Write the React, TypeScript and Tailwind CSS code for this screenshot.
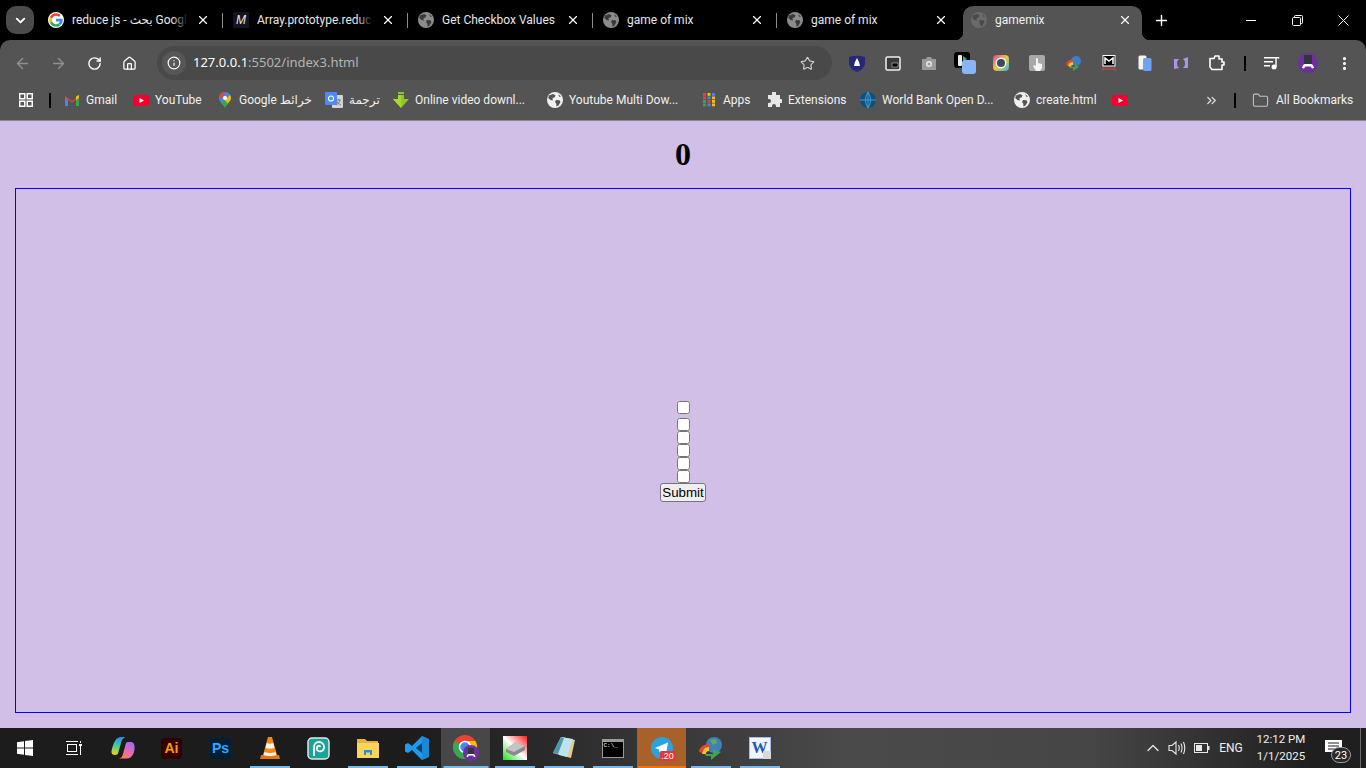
import React from 'react';
import {
  ArrowLeft,
  ArrowRight,
  RotateCw,
  Home,
  Info,
  Star,
  X,
  Plus,
  ChevronDown,
  ChevronUp,
  ChevronsRight,
  Folder,
  EllipsisVertical,
} from 'lucide-react';

const UI_FONT = "font-['Roboto','Noto_Sans','DejaVu_Sans',sans-serif]";

function Globe({ size = 16, color = '#8c8c8c', land = '#3a3a3a' }: { size?: number; color?: string; land?: string }) {
  return (
    <svg width={size} height={size} viewBox="0 0 16 16" className="shrink-0">
      <circle cx="8" cy="8" r="8" fill={color} />
      <path d="M2 3.5 L6 2 L8.5 3.2 L7.5 5.5 L5.5 6 L5.8 8.5 L3.5 8 L1.2 6 Z" fill={land} />
      <path d="M9 8 L12.5 8.2 L13.5 10 L11.5 13.5 L9.5 14.5 L9.2 11.5 L8 10 Z" fill={land} />
      <path d="M11 2 L14 4.5 L12.5 5 Z" fill={land} />
    </svg>
  );
}

function GoogleG() {
  return (
    <svg width="16" height="16" viewBox="0 0 48 48" className="shrink-0">
      <circle cx="24" cy="24" r="24" fill="#fff" />
      <path fill="#EA4335" d="M24 11c3.4 0 6.3 1.2 8.6 3.3l5.4-5.4C34.500 5.700 29.700 3.500 24 3.500 16 3.500 9.100 8.100 5.700 14.800l6.400 5C13.700 14.700 18.400 11 24 11z" />
      <path fill="#4285F4" d="M44 24.500c0-1.400-.1-2.700-.4-4H24v7.800h11.300c-.5 2.500-2 4.700-4.200 6.100l6.200 4.800C41.600 36.600 44 31 44 24.500z" />
      <path fill="#FBBC05" d="M12.100 28.200c-.4-1.300-.7-2.700-.7-4.200s.3-2.900.7-4.200l-6.400-5C4.300 17.600 3.500 20.700 3.500 24s.8 6.400 2.200 9.200l6.400-5z" />
      <path fill="#34A853" d="M24 44.500c5.500 0 10.100-1.800 13.300-4.900l-6.200-4.800c-1.800 1.200-4.200 1.900-7.100 1.900-5.600 0-10.300-3.700-11.900-8.800l-6.400 5C9.100 39.900 16 44.500 24 44.500z" />
    </svg>
  );
}

function MdnIcon() {
  return (
    <div className="w-4 h-4 bg-[#15141f] flex items-center justify-center shrink-0">
      <span className="text-[12px] leading-none italic text-[#e8e8e8] font-['Liberation_Sans',sans-serif]">M</span>
    </div>
  );
}

const tabs = [
  { title: 'reduce js - بحث Google', icon: <GoogleG />, width: 'w-[185px]', fade: true },
  { title: 'Array.prototype.reduce()', icon: <MdnIcon />, width: 'w-[185px]', fade: true },
  { title: 'Get Checkbox Values', icon: <Globe />, width: 'w-[185px]', fade: false },
  { title: 'game of mix', icon: <Globe />, width: 'w-[184px]', fade: false },
  { title: 'game of mix', icon: <Globe />, width: 'w-[184px]', fade: false },
];

function TabStrip() {
  return (
    <div className={`h-10 bg-black flex items-start shrink-0 relative ${UI_FONT}`}>
      <div className="ml-[6px] mt-[6px] w-[28px] h-[28px] rounded-[10px] bg-[#4b4b4b] flex items-center justify-center shrink-0">
        <ChevronDown size={15} strokeWidth={3} color="#fff" />
      </div>
      <div className="ml-[6px] flex items-start">
        {tabs.map((tab, i) => (
          <div key={i} className={`${tab.width} h-10 flex items-center pl-2 pr-[15px] gap-2 relative shrink-0`}>
            {tab.icon}
            <span className="flex-1 overflow-hidden whitespace-nowrap text-[12px] text-[#e6e6e6] relative">
              {tab.title}
              {tab.fade && <span className="absolute right-0 top-0 bottom-0 w-4 bg-gradient-to-r from-transparent to-black" />}
            </span>
            <X size={14} strokeWidth={2} color="#fff" className="shrink-0" />
            {i < tabs.length - 1 && <span className="absolute right-[2px] top-[13px] w-px h-[15px] bg-[#8a8a8a]" />}
          </div>
        ))}
        <div className="w-[179px] h-[34px] mt-[6px] bg-[#545454] rounded-t-[10px] flex items-center pl-2 pr-[10px] gap-2 relative shrink-0 pb-[6px]">
          <Globe color="#6a6a6a" land="#4a4a4a" />
          <span className="flex-1 text-[12px] text-[#f0f0f0] whitespace-nowrap">gamemix</span>
          <X size={14} strokeWidth={2} color="#fff" />
          <span className="absolute -left-[8px] bottom-0 w-2 h-2 bg-[radial-gradient(circle_at_0_0,#000_8px,#545454_8.500px)]" />
          <span className="absolute -right-[8px] bottom-0 w-2 h-2 bg-[radial-gradient(circle_at_100%_0,#000_8px,#545454_8.500px)]" />
        </div>
        <div className="w-[38px] h-10 flex items-center justify-center shrink-0">
          <Plus size={17} strokeWidth={2} color="#fff" />
        </div>
      </div>
      <div className="ml-auto flex h-10 items-center shrink-0">
        <div className="w-[46px] h-10 flex items-center justify-center">
          <span className="w-[10px] h-px bg-white" />
        </div>
        <div className="w-[46px] h-10 flex items-center justify-center">
          <svg width="11" height="11" viewBox="0 0 11 11" fill="none" stroke="#fff">
            <rect x="0.500" y="2.500" width="8" height="8" rx="1" />
            <path d="M2.500 2.500V1.500a1 1 0 0 1 1-1h6a1 1 0 0 1 1 1v6a1 1 0 0 1-1 1H8.500" />
          </svg>
        </div>
        <div className="w-[46px] h-10 flex items-center justify-center">
          <svg width="11" height="11" viewBox="0 0 11 11" stroke="#fff" strokeWidth="1">
            <path d="M0.500 0.500L10.500 10.500M10.500 0.500L0.500 10.500" />
          </svg>
        </div>
      </div>
    </div>
  );
}

function ExtSlot({ children }: { children: React.ReactNode }) {
  return <div className="w-9 h-[34px] flex items-center justify-center shrink-0 relative">{children}</div>;
}

function Toolbar() {
  return (
    <div className={`h-10 pt-[6px] bg-[#545454] rounded-t-[10px] flex items-center pl-1 shrink-0 font-['Noto_Sans',sans-serif]`}>
      <div className="w-9 flex justify-center"><ArrowLeft size={17} strokeWidth={2} color="#8f8f8f" /></div>
      <div className="w-9 flex justify-center"><ArrowRight size={17} strokeWidth={2} color="#8f8f8f" /></div>
      <div className="w-9 flex justify-center"><RotateCw size={15} strokeWidth={2.200} color="#fff" /></div>
      <div className="w-[35px] flex justify-center"><Home size={15} strokeWidth={2} color="#fff" /></div>
      <div className="ml-[10px] w-[675px] h-[34px] rounded-full bg-[#494949] flex items-center pl-[5px] pr-[17px] shrink-0">
        <div className="w-6 h-6 rounded-full bg-[#575757] flex items-center justify-center shrink-0">
          <Info size={14} strokeWidth={2} color="#fff" />
        </div>
        <div className="ml-[7px] text-[13px] whitespace-nowrap">
          <span className="text-white">127.0.0.1</span>
          <span className="text-[#b4b4b4]">:5502/index3.html</span>
        </div>
        <Star size={15} strokeWidth={1.800} color="#d0d0d0" className="ml-auto" />
      </div>
      <div className="ml-[7px] flex items-center">
        <ExtSlot>
          <svg width="16" height="17" viewBox="0 0 16 17">
            <path d="M0 2 Q8 -0.500 16 2 V9 Q15 14 8 17 Q1 14 0 9 Z" fill="#26267a" />
            <path d="M8 3 L10 7 L11 11 H5 L6 7 Z" fill="#fff" />
          </svg>
        </ExtSlot>
        <ExtSlot>
          <svg width="16" height="15" viewBox="0 0 16 15">
            <rect x="1" y="1" width="14" height="13" rx="1.500" fill="#3a3a3a" stroke="#f0f0f0" strokeWidth="1.500" />
            <rect x="7" y="7" width="6" height="4" fill="#000" stroke="#f0f0f0" strokeWidth="0.500" />
          </svg>
        </ExtSlot>
        <ExtSlot>
          <svg width="16" height="14" viewBox="0 0 16 14">
            <path d="M1 3 H5 L6 1 H10 L11 3 H15 V14 H1 Z" fill="#9a9a9a" />
            <circle cx="8" cy="8" r="3" fill="#e8e8e8" />
            <circle cx="8" cy="8" r="1.500" fill="#9a9a9a" />
          </svg>
        </ExtSlot>
        <ExtSlot>
          <svg width="24" height="24" viewBox="0 0 24 24">
            <rect x="1" y="1" width="16" height="16" rx="3" fill="#000" />
            <rect x="5" y="4" width="4" height="11" rx="1" fill="#eee" />
            <path d="M10 5 L14 8 L10 11 Z" fill="#2fb36f" />
            <rect x="9" y="9" width="14" height="14" rx="3" fill="#8ab4f8" />
          </svg>
        </ExtSlot>
        <ExtSlot>
          <svg width="16" height="16" viewBox="0 0 16 16">
            <defs>
              <linearGradient id="ring" x1="0" y1="0" x2="1" y2="1">
                <stop offset="0" stopColor="#e83e9c" />
                <stop offset="0.500" stopColor="#f7c23c" />
                <stop offset="1" stopColor="#22b8e8" />
              </linearGradient>
            </defs>
            <rect width="16" height="16" rx="4" fill="url(#ring)" />
            <circle cx="8" cy="8" r="5.500" fill="#f4f4f4" />
            <circle cx="8" cy="8" r="4" fill="#3d4a57" />
          </svg>
        </ExtSlot>
        <ExtSlot>
          <svg width="16" height="16" viewBox="0 0 16 16">
            <rect width="16" height="16" rx="2" fill="#a8a8a8" />
            <path d="M7 4 a1 1 0 0 1 2 0 V8 L13 9 V13 L11 16 H7 L4 11 L6 10 L7 11 Z" fill="#f4f4f4" />
          </svg>
        </ExtSlot>
        <ExtSlot>
          <svg width="17" height="16" viewBox="0 0 17 16">
            <circle cx="11" cy="6" r="5" fill="#3f7fbf" />
            <path d="M1 10 Q2 4 8 5 L7 8 Q4 8 4 11 Z" fill="#e04b2e" />
            <path d="M3 11 Q4 7 8 7 V10 Q6 10 6 12 Z" fill="#f2c230" />
            <path d="M4 12 H10 V9 L14 12 L8 16 V13 H5 Z" fill="#3aa655" />
          </svg>
        </ExtSlot>
        <ExtSlot>
          <svg width="14" height="16" viewBox="0 0 14 16">
            <rect x="1" y="0.500" width="12" height="10.500" fill="#000" stroke="#fff" />
            <path d="M3 9 V3 L7 6 L11 3 V9" fill="none" stroke="#fff" strokeWidth="1.500" />
            <path d="M1 14 H13 M1 12.500 V15.500 M13 12.500 V15.500" stroke="#e04545" strokeWidth="1" />
          </svg>
        </ExtSlot>
        <ExtSlot>
          <svg width="14" height="16" viewBox="0 0 14 16">
            <rect x="0.500" y="0.500" width="8" height="14" rx="1.500" fill="#f4f4f4" />
            <rect x="5" y="3" width="8.500" height="13" rx="1.500" fill="#6ea4f0" />
          </svg>
        </ExtSlot>
        <ExtSlot>
          <svg width="14" height="13" viewBox="0 0 14 13">
            <path d="M0 2 H5 A5 5 0 0 0 3 6.500 A5 5 0 0 0 5 11 L0 12 Z" fill="#a994e8" />
            <path d="M14 0 V11 H9 A5 5 0 0 0 11 6.500 A5 5 0 0 0 9 2 Z" fill="#a994e8" />
          </svg>
        </ExtSlot>
        <ExtSlot>
          <svg width="16" height="16" viewBox="0 0 16 16" fill="none" stroke="#fff" strokeWidth="1.600" strokeLinejoin="round">
            <path d="M1 3.500 H5 L6 1 H10 V4 H13 V7 H15 V10 H13 V14.500 H3 L1 12 Z" />
          </svg>
        </ExtSlot>
      </div>
      <span className="ml-[9px] w-[2px] h-[15px] bg-black shrink-0" />
      <div className="ml-[8px] flex items-center">
        <ExtSlot>
          <svg width="16" height="14" viewBox="0 0 16 14" fill="#fff">
            <rect x="0" y="1" width="11" height="1.500" />
            <rect x="0" y="5" width="9" height="1.500" />
            <rect x="0" y="9" width="6" height="1.500" />
            <circle cx="10" cy="11" r="2.500" />
            <rect x="11.300" y="1" width="1.400" height="10" />
            <rect x="11.300" y="1" width="4" height="1.500" />
          </svg>
        </ExtSlot>
        <ExtSlot>
          <svg width="20" height="20" viewBox="0 0 20 20">
            <circle cx="10" cy="10" r="10" fill="#6d2fa0" />
            <rect x="6" y="2" width="8" height="10" fill="#33333b" />
            <path d="M4 15 Q5 11 7 11 H13 Q15 11 16 15 L14 15.500 L12.500 13.500 H7.500 L6 15.500 Z" fill="#fff" />
          </svg>
        </ExtSlot>
        <ExtSlot>
          <EllipsisVertical size={17} strokeWidth={2.500} color="#fff" />
        </ExtSlot>
      </div>
    </div>
  );
}

function YoutubeMark({ w = 16 }: { w?: number }) {
  return (
    <svg width={w} height="11" viewBox="0 0 16 11" className="shrink-0">
      <rect width="16" height="11" rx="3" fill="#f4002e" />
      <path d="M6.500 3 L11 5.500 L6.500 8 Z" fill="#fff" />
    </svg>
  );
}

const bookmarks = [
  {
    label: 'Gmail',
    width: 'w-[69px]',
    icon: (
      <svg width="14" height="11" viewBox="0 0 14 11" className="mx-px shrink-0">
        <path d="M0 1 L7 6 L14 1 V11 H11 V4.500 L7 7.500 L3 4.500 V11 H0 Z" fill="#ea4335" />
        <path d="M0 3 V11 H3 V5 Z" fill="#4285f4" />
        <path d="M14 3 V11 H11 V5 Z" fill="#34a853" />
        <path d="M11 1.500 L14 0 V3 L11 5 Z" fill="#fbbc05" />
      </svg>
    ),
  },
  { label: 'YouTube', width: 'w-[84px]', icon: <YoutubeMark /> },
  {
    label: 'Google خرائط',
    width: 'w-[108px]',
    icon: (
      <svg width="12" height="16" viewBox="0 0 12 16" className="mx-[2px] shrink-0">
        <path d="M6 0 A6 6 0 0 1 12 6 C12 10 8 12 6 16 C4 12 0 10 0 6 A6 6 0 0 1 6 0 Z" fill="#34a853" />
        <path d="M6 0 A6 6 0 0 1 11 3 L3 10 C1 8.500 0 7.500 0 6 A6 6 0 0 1 6 0 Z" fill="#4285f4" />
        <path d="M2 1.500 L7 0 L3 6 L0 6 Z" fill="#ea4335" />
        <path d="M11 3 Q12 4.500 12 6 C12 8 10 10 8.500 11.500 L6 8 Z" fill="#fbbc05" />
        <circle cx="6" cy="6" r="2" fill="#fff" />
      </svg>
    ),
  },
  {
    label: 'ترجمة',
    width: 'w-[68px]',
    icon: (
      <svg width="18" height="16" viewBox="0 0 18 16" className="shrink-0">
        <rect x="7" y="3" width="11" height="13" rx="1" fill="#d4d4d4" />
        <rect x="0" y="0" width="12" height="13" rx="1" fill="#4c8bf5" />
        <circle cx="6" cy="6.500" r="2.500" fill="none" stroke="#fff" strokeWidth="1.200" />
        <path d="M11 8 H16 M13.500 7 V8 M15 8 Q14 12 11 13 M12 9.500 Q13 12 16 13" fill="none" stroke="#777" strokeWidth="0.900" />
      </svg>
    ),
  },
  {
    label: 'Online video downl...',
    width: 'w-[154px]',
    icon: (
      <svg width="16" height="16" viewBox="0 0 16 16" className="shrink-0">
        <path d="M5 0 H11 V2 H5 Z M5 3 H11 V7 H16 L8 16 L0 7 H5 Z" fill="#8ac926" />
        <path d="M8 16 L0 7 H5 V3 H8 Z" fill="#a6d930" />
      </svg>
    ),
  },
  { label: 'Youtube Multi Dow...', width: 'w-[154px]', icon: <Globe color="#f0f0f0" land="#545454" /> },
  {
    label: 'Apps',
    width: 'w-[65px]',
    icon: (
      <svg width="16" height="16" viewBox="0 0 16 16" className="shrink-0">
        {[0, 1, 2, 3].map((row) =>
          [0, 1, 2].map((col) => (
            <rect
              key={`${row}-${col}`}
              x={2 + col * 4.500}
              y={1 + row * 3.500}
              width="3"
              height="2.800"
              fill={[['#ea4335', '#fbbc05', '#4285f4'], ['#ea4335', '#4285f4', '#fbbc05'], ['#34a853', '#ea4335', '#fbbc05'], ['#34a853', '#4285f4', '#fbbc05']][row][col]}
            />
          )),
        )}
      </svg>
    ),
  },
  {
    label: 'Extensions',
    width: 'w-[94px]',
    icon: (
      <svg width="16" height="16" viewBox="0 0 16 16" fill="#e8e8e8" className="shrink-0">
        <path d="M6 1 a2 2 0 0 1 4 0 V3 H14 V7 H15 a2 2 0 0 1 0 4 H14 V15 H10 V14 a2 2 0 0 0 -4 0 V15 H2 V11 H3 a2 2 0 0 0 0 -4 H2 V3 H6 Z" />
      </svg>
    ),
  },
  {
    label: 'World Bank Open D...',
    width: 'w-[154px]',
    icon: (
      <svg width="16" height="16" viewBox="0 0 17 17" className="shrink-0">
        <circle cx="8.500" cy="8.500" r="8.500" fill="#12507a" />
        <path d="M8.500 0 V17 M0 8.500 H17 M8.500 0 Q3 8.500 8.500 17 M8.500 0 Q14 8.500 8.500 17" fill="none" stroke="#3fa3d8" strokeWidth="1" />
      </svg>
    ),
  },
  { label: 'create.html', width: 'w-[98px]', icon: <Globe color="#f0f0f0" land="#545454" /> },
];

function BookmarksBar() {
  return (
    <div className={`h-[41px] bg-[#545454] border-b border-[#8a8a8a] flex items-center shrink-0 ${UI_FONT}`}>
      <div className="w-[49px] flex items-center pl-[19px] shrink-0">
        <svg width="14" height="14" viewBox="0 0 14 14" fill="none" stroke="#fff" strokeWidth="1.500">
          <rect x="0.750" y="0.750" width="5" height="5" />
          <rect x="8.250" y="0.750" width="5" height="5" />
          <rect x="0.750" y="8.250" width="5" height="5" />
          <rect x="8.250" y="8.250" width="5" height="5" />
        </svg>
      </div>
      <span className="w-[2px] h-[15px] bg-black shrink-0" />
      <div className="ml-[13px] flex items-center">
        {bookmarks.map((b) => (
          <div key={b.label} className={`${b.width} flex items-center gap-[6px] shrink-0 whitespace-nowrap text-[12px] text-[#f0f0f0]`}>
            {b.icon}
            <span>{b.label}</span>
          </div>
        ))}
        <div className="w-[92px] flex items-center shrink-0">
          <YoutubeMark />
        </div>
      </div>
      <ChevronsRight size={15} strokeWidth={2} color="#e0e0e0" className="shrink-0" />
      <span className="ml-[15px] w-[2px] h-[15px] bg-black shrink-0" />
      <Folder size={17} strokeWidth={1.500} color="#c4c4c4" className="ml-[16px] shrink-0" />
      <span className="ml-[7px] whitespace-nowrap text-[12px] text-[#f0f0f0]">All Bookmarks</span>
    </div>
  );
}

function Game() {
  return (
    <main className="flex-1 bg-[#d2bfe7] flex flex-col px-[15px] min-h-0">
      <h1 className="h-[67px] pb-[2px] shrink-0 flex items-center justify-center text-[32px] font-bold text-black font-['Liberation_Serif',serif]">
        0
      </h1>
      <div className="h-[525px] shrink-0 border border-[#0000ff] flex flex-col items-center justify-center pt-[2px]">
        <input type="checkbox" className="block w-[13px] h-[13px] mb-1" />
        <input type="checkbox" className="block w-[13px] h-[13px]" />
        <input type="checkbox" className="block w-[13px] h-[13px]" />
        <input type="checkbox" className="block w-[13px] h-[13px]" />
        <input type="checkbox" className="block w-[13px] h-[13px]" />
        <input type="checkbox" className="block w-[13px] h-[13px]" />
        <button className="h-[19px] w-[46px] bg-[#efefef] border border-[#767676] rounded-[3px] text-[13.330px] leading-none text-black font-['Liberation_Sans',sans-serif]">
          Submit
        </button>
      </div>
    </main>
  );
}

type TaskItem = { key: string; node: React.ReactNode; bar?: string; bg?: string };

const taskItems: TaskItem[] = [
  {
    key: 'start',
    node: (
      <svg width="16" height="16" viewBox="0 0 16 16" fill="#fff">
        <path d="M0 2.300 L7 1.300 V7.500 H0 Z M8 1.100 L16 0 V7.500 H8 Z M0 8.500 H7 V14.700 L0 13.700 Z M8 8.500 H16 V16 L8 14.900 Z" />
      </svg>
    ),
  },
  {
    key: 'taskview',
    node: (
      <svg width="16" height="16" viewBox="0 0 16 16" fill="none" stroke="#fff" strokeWidth="1">
        <rect x="1.500" y="4.500" width="9" height="7" />
        <path d="M0 1.500 H12 M0 14.500 H12 M14.500 1 V3 M14.500 6 V15" />
        <rect x="13" y="4" width="3" height="2" fill="#fff" stroke="none" />
      </svg>
    ),
  },
  {
    key: 'copilot',
    node: (
      <svg width="24" height="22" viewBox="0 0 24 22">
        <defs>
          <linearGradient id="cop1" x1="0.500" y1="0" x2="0.300" y2="1">
            <stop offset="0" stopColor="#2a8fe8" />
            <stop offset="0.550" stopColor="#4fd08a" />
            <stop offset="1" stopColor="#f5d020" />
          </linearGradient>
          <linearGradient id="cop2" x1="0.800" y1="0" x2="0.200" y2="1">
            <stop offset="0" stopColor="#a06af0" />
            <stop offset="0.600" stopColor="#f06aa8" />
            <stop offset="1" stopColor="#f58a3c" />
          </linearGradient>
        </defs>
        <path d="M7 1 Q8 0 10 0 H15 Q11 1 10 6 L7.500 15 Q7 18 4 18 Q0 18 0.500 14 Q2 7 4 4 Q5 1.500 7 1 Z" fill="url(#cop1)" />
        <path d="M15 6 Q16 5 17 5 H20 Q23 5 23.500 9 Q24 15 21 19 Q19 21.500 16 21.500 H8 Q11 21 12 17 Z" fill="url(#cop2)" />
      </svg>
    ),
  },
  {
    key: 'ai',
    node: (
      <div className="w-[21px] h-[21px] rounded-[3px] bg-[#330000] flex items-center justify-center text-[14px] font-bold text-[#ff9a00] font-['Liberation_Sans',sans-serif]">
        Ai
      </div>
    ),
  },
  {
    key: 'ps',
    node: (
      <div className="w-[21px] h-[21px] rounded-[3px] bg-[#001e36] flex items-center justify-center text-[14px] font-bold text-[#31a8ff] font-['Liberation_Sans',sans-serif]">
        Ps
      </div>
    ),
  },
  {
    key: 'vlc',
    bar: 'w-[40px] bg-[#76b9ed]',
    node: (
      <svg width="20" height="23" viewBox="0 0 20 23">
        <path d="M1 18 H19 L20 22 H0 Z" fill="#e8760a" />
        <path d="M8 0 H12 L17 18 Q10 21 3 18 Z" fill="#f58a0b" />
        <path d="M6.700 6 Q10 7.500 13.300 6 L14.500 11 Q10 12.500 5.500 11 Z" fill="#f4f4f4" />
        <path d="M4.500 15 Q10 17 15.500 15 L16.500 18 Q10 20 3.500 18 Z" fill="#f4f4f4" />
      </svg>
    ),
  },
  {
    key: 'photopea',
    node: (
      <svg width="23" height="23" viewBox="0 0 23 23">
        <rect x="1" y="1" width="21" height="21" rx="4" fill="#18a497" stroke="#e6e6e6" strokeWidth="1.500" />
        <path d="M7 19 V10 A5 5 0 0 1 17 10 A4 4 0 0 1 10 13 V10 A2 2 0 0 1 13.500 10" fill="none" stroke="#fff" strokeWidth="1.800" />
      </svg>
    ),
  },
  {
    key: 'files',
    bar: 'w-[40px] bg-[#76b9ed]',
    node: (
      <svg width="22" height="20" viewBox="0 0 22 20">
        <path d="M0 1 H8 L10 3 H21 V6 H0 Z" fill="#e8b13a" />
        <rect x="0" y="5" width="22" height="15" fill="#fbd45c" />
        <path d="M7 17 V12 H15 V17 H13 V14.500 H9 V17 Z" fill="#2a8fd8" />
      </svg>
    ),
  },
  {
    key: 'vscode',
    bar: 'w-[40px] bg-[#76b9ed]',
    node: (
      <svg width="24" height="24" viewBox="0 0 24 24">
        <path d="M17 0 L24 3 V21 L17 24 L7 14 L3 17 L0 15.500 V8.500 L3 7 L7 10 Z M17 7 L11 12 L17 17 Z" fill="#1f9cf0" />
        <path d="M17 0 L24 3 V21 L17 24 Z M17 7 V17 L11 12 Z" fill="#1070b8" fillRule="evenodd" opacity="0.450" />
      </svg>
    ),
  },
  {
    key: 'chrome',
    bar: 'w-[45px] bg-[#76b9ed]',
    bg: 'bg-[#474747]',
    node: (
      <svg width="26" height="26" viewBox="0 0 26 26">
        <circle cx="12" cy="12" r="12" fill="#ea4335" />
        <path d="M12 12 L1.600 6 A12 12 0 0 0 12 24 L18 13.500 Z" fill="#34a853" />
        <path d="M12 24 A12 12 0 0 0 22.400 6 H12 Z" fill="#fbbc05" />
        <circle cx="12" cy="12" r="5.500" fill="#4285f4" stroke="#fff" strokeWidth="1.500" />
        <circle cx="18" cy="18" r="8" fill="#6d2fa0" />
        <rect x="15" y="13" width="6" height="7" fill="#33333b" />
        <path d="M13.500 22 Q14 19 16 19 H20 Q22 19 22.500 22 H21 L20 20.500 H16 L15 22 Z" fill="#fff" />
      </svg>
    ),
  },
  {
    key: 'disk',
    bar: 'w-[40px] bg-[#76b9ed]',
    node: (
      <svg width="24" height="24" viewBox="0 0 24 24">
        <defs>
          <linearGradient id="disk" x1="1" y1="0" x2="0" y2="1">
            <stop offset="0" stopColor="#ff1a1a" />
            <stop offset="0.500" stopColor="#ffffff" />
            <stop offset="1" stopColor="#1ae01a" />
          </linearGradient>
        </defs>
        <rect width="24" height="24" fill="url(#disk)" />
        <path d="M3 13 L13 6 L22 10 L22 14 L11 20 L3 16 Z" fill="#8a8a8a" />
        <path d="M3 13 L13 6 L22 10 L11 16 Z" fill="#c4c4c4" />
      </svg>
    ),
  },
  {
    key: 'notepad',
    bar: 'w-[40px] bg-[#76b9ed]',
    node: (
      <svg width="24" height="24" viewBox="0 0 24 24">
        <path d="M10 1 L23 4 L19 22 L7 19 Z" fill="#e8c98a" />
        <path d="M9 1 L21 3 L15 21 L1 17 Z" fill="#bfe3ec" />
        <path d="M1 17 L9 1 L12 2 L6 18 Z" fill="#4d97ad" />
      </svg>
    ),
  },
  {
    key: 'cmd',
    bar: 'w-[40px] bg-[#76b9ed]',
    node: (
      <div className="w-[22px] h-[19px] bg-black border border-[#9a9a9a] border-t-[3px] flex items-start pl-px">
        <span className="text-[6px] leading-[8px] text-white font-['Liberation_Mono',monospace]">C:\_</span>
      </div>
    ),
  },
  {
    key: 'telegram',
    bar: 'w-[48px] bg-[#f4720c]',
    bg: 'bg-[#a9612a]',
    node: (
      <div className="relative w-[22px] h-[22px]">
        <svg width="22" height="22" viewBox="0 0 22 22">
          <circle cx="11" cy="11" r="11" fill="#2aa3dc" />
          <path d="M4 11 L17 5.500 L15 17 L10.500 13.500 L8.500 15.500 L8 12.500 Z" fill="#fff" />
        </svg>
        <span className="absolute left-[9px] top-[14px] w-[16px] h-[10px] rounded-[2px] bg-[#e8353b] text-[9px] leading-[10px] whitespace-nowrap text-center text-white font-['Liberation_Sans',sans-serif]">
          .20
        </span>
      </div>
    ),
  },
  {
    key: 'idm',
    bar: 'w-[40px] bg-[#76b9ed]',
    node: (
      <svg width="24" height="24" viewBox="0 0 24 24">
        <circle cx="15" cy="9" r="8" fill="#3f7fbf" />
        <path d="M11 4 L17 3 L18 7 L14 9 Z" fill="#62ad4a" />
        <path d="M0 16 Q1 8 11 8 L10 12 Q5 12 4 17 Z" fill="#e04b2e" />
        <path d="M3 18 Q4 11 10 11 V15 Q7 15 7 18 Z" fill="#f2c230" />
        <path d="M6 18 H14 V13 L22 16 L12 24 V20 H7 Z" fill="#3aa655" />
      </svg>
    ),
  },
  {
    key: 'word',
    bar: 'w-[40px] bg-[#76b9ed]',
    node: (
      <div className="relative w-[22px] h-[22px] bg-[#f0f5fc] border border-[#9fbde8] flex items-center justify-center">
        <span className="text-[16px] leading-none font-bold text-[#1f5bb5] font-['Liberation_Serif',serif]">W</span>
        <span className="absolute right-[-1px] bottom-[-1px] w-2 h-2 bg-[#d8d8d8]" />
      </div>
    ),
  },
];

function Taskbar() {
  return (
    <footer className={`h-10 shrink-0 bg-[linear-gradient(90deg,#1c1c1c_30%,#4a4a4a_62%,#464646_80%,#1f1f1f_96%)] flex items-stretch text-white ${UI_FONT}`}>
      {taskItems.map((item) => (
        <div key={item.key} className={`w-[49px] shrink-0 flex items-center justify-center relative ${item.bg ?? ''}`}>
          {item.node}
          {item.bar && <span className={`absolute bottom-0 left-1/2 -translate-x-1/2 h-[2px] ${item.bar}`} />}
        </div>
      ))}
      <div className="ml-auto flex items-center pr-[5px]">
        <ChevronUp size={20} strokeWidth={1.500} color="#e8e8e8" />
        <svg width="18" height="16" viewBox="0 0 18 16" fill="none" stroke="#e8e8e8" strokeWidth="1.100" className="ml-[5px]">
          <path d="M1 5.500 H4 L8 2 V14 L4 10.500 H1 Z" />
          <path d="M10.500 5 Q12 8 10.500 11 M13 3.500 Q15 8 13 12.500 M15.500 2 Q18 8 15.500 14" />
        </svg>
        <svg width="16" height="10" viewBox="0 0 16 10" className="ml-[8px]">
          <rect x="0.500" y="0.500" width="13" height="9" fill="none" stroke="#e8e8e8" />
          <rect x="2" y="2" width="6" height="6" fill="#e8e8e8" />
          <rect x="14" y="3" width="1.500" height="4" fill="#e8e8e8" />
        </svg>
        <span className="ml-[9px] w-6 text-[12px] text-center text-[#f0f0f0]">ENG</span>
        <div className="ml-[13px] w-[50px] flex flex-col items-center text-[11.500px] leading-[17px] text-[#f0f0f0] whitespace-nowrap">
          <span>12:12 PM</span>
          <span>1/1/2025</span>
        </div>
        <div className="ml-[19px] relative w-[22px] h-10">
          <svg width="17" height="14" viewBox="0 0 17 14" className="absolute left-0 top-[12px]" fill="#fff">
            <path d="M0 0 H17 V12 H0 Z" />
            <path d="M3 3 H14 M3 6 H14 M3 9 H11" stroke="#222" strokeWidth="1" />
          </svg>
          <span className="absolute left-[6px] top-[19px] w-[20px] h-[16px] rounded-full border border-[#9a9a9a] bg-[#2a2a2a] flex items-center justify-center text-[11px] leading-none">
            23
          </span>
        </div>
        <span className="ml-[13px] w-px h-10 bg-[#6a6a6a]" />
      </div>
    </footer>
  );
}

export default function App() {
  return (
    <div className="w-[1366px] h-[768px] flex flex-col overflow-hidden bg-black">
      <TabStrip />
      <Toolbar />
      <BookmarksBar />
      <Game />
      <Taskbar />
    </div>
  );
}
